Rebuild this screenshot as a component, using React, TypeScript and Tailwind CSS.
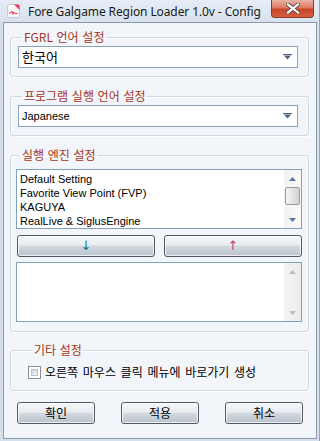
const kr = "font-['Noto_Sans_CJK_KR',sans-serif]";
const btn =
  "h-[22px] rounded-[3px] border border-[#4f5863] bg-[linear-gradient(to_bottom,#f5f7f9_0%,#e8ecef_46%,#d3dae0_50%,#b9c3cc_100%)] shadow-[inset_0_0_0_1px_rgba(255,255,255,0.75)] flex items-center justify-center";
const group =
  "ml-[6px] w-[299px] rounded-[3px] border border-[#d0d9e3] shadow-[1px_1px_0_#ffffff,inset_1px_1px_0_#ffffff]";

function Legend({ children }: { children: React.ReactNode }) {
  return (
    <legend className={`ml-[4px] px-[2px] text-[12px] leading-[14px] text-[#a2341a] [word-spacing:1px] ${kr}`}>
      {children}
    </legend>
  );
}

function ComboArrow() {
  return (
    <svg width="9" height="6" viewBox="0 0 9 6" className="mr-[5px]">
      <path d="M0 0H9V1H0Z M1 1.5H8L4.5 5.5Z" fill="#4b6183" />
    </svg>
  );
}

function Combo({ children }: { children: React.ReactNode }) {
  return (
    <div className="w-[280px] h-[22px] border border-[#8aa1b9] bg-white flex items-center justify-between pl-[3px]">
      {children}
      <ComboArrow />
    </div>
  );
}

function Tri({ up, color }: { up?: boolean; color: string }) {
  return (
    <svg width="7" height="4" viewBox="0 0 7 4">
      <path d={up ? "M0 4L3.5 0L7 4Z" : "M0 0L7 0L3.5 4Z"} fill={color} />
    </svg>
  );
}

function ScrollBar({ disabled }: { disabled?: boolean }) {
  const c = disabled ? "#bcbcbc" : "#5577a0";
  return (
    <div
      className={`w-[17px] h-full flex flex-col ${
        disabled
          ? "bg-[linear-gradient(to_right,#f4f4f4,#ececec)]"
          : "bg-[linear-gradient(to_right,#f2f2f2,#fafafa)]"
      }`}
    >
      <div className="h-[17px] flex items-center justify-center">
        <Tri up color={c} />
      </div>
      {disabled ? (
        <div className="flex-1" />
      ) : (
        <>
          <div className="h-[18px] mx-[1px] rounded-[2px] border border-[#9c9c9c] bg-[linear-gradient(to_right,#f3f3f3,#e2e2e2_60%,#cfcfcf)]" />
          <div className="flex-1" />
        </>
      )}
      <div className="h-[17px] flex items-center justify-center">
        <Tri color={c} />
      </div>
    </div>
  );
}

function ListBox({ items, disabled }: { items: string[]; disabled?: boolean }) {
  return (
    <div className="w-[286px] h-[60px] border border-[#829fbc] bg-white flex">
      <div className="flex-1 pl-[3px] pt-[2px] font-['Liberation_Sans',Arial,sans-serif] text-[11px] leading-[14px] text-black overflow-hidden">
        {items.map((it) => (
          <div key={it}>{it}</div>
        ))}
      </div>
      <ScrollBar disabled={disabled} />
    </div>
  );
}

export default function App() {
  return (
    <div className="w-[320px] h-[441px] bg-[#d6e0ec] border-r border-[#98a6b6] overflow-hidden flex flex-col">
      {/* title bar */}
      <div className="h-[22px] flex items-start bg-[linear-gradient(to_bottom,#e6edf6,#d7e1ed)]">
        <svg width="13" height="14" viewBox="0 0 13 14" className="ml-[7px] mt-[4px]">
          <rect x="0.5" y="0.5" width="12" height="13" rx="2" fill="#fbfbfb" stroke="#c9c9c9" />
          <path d="M7 0.5H11Q12.5 0.5 12.5 2V6L7 0.5Z" fill="#ee3b6a" />
          <path d="M2 9H4L5 7L6 10.5L7 8L8 9.5H11" fill="none" stroke="#e0334f" strokeWidth="0.9" />
        </svg>
        <span className="ml-[8px] mt-[4px] text-[12px] leading-[16px] text-[#1a1a1a] font-['Noto_Sans',sans-serif] tracking-[-0.1px]">
          Fore Galgame Region Loader 1.0v - Config
        </span>
        <div className="ml-auto mr-[5px] w-[43px] h-[18px] rounded-b-[4px] border border-t-0 border-[#8a3a2a] bg-[linear-gradient(to_bottom,#eab3a5_0%,#dc7a62_45%,#c8452a_55%,#d85f3e_100%)] flex items-center justify-center">
          <svg width="14" height="11" viewBox="0 0 14 11">
            <path d="M2 1.5L12 9.5M12 1.5L2 9.5" stroke="#5a4a48" strokeWidth="4" strokeLinecap="square" />
            <path d="M2 1.5L12 9.5M12 1.5L2 9.5" stroke="#ffffff" strokeWidth="2.2" strokeLinecap="square" />
          </svg>
        </div>
      </div>

      {/* client area */}
      <div className="ml-[3px] w-[314px] h-[417px] border border-[#8b99aa] bg-[#f2f5fa] flex flex-col">
        <fieldset className={`${group} mt-[7px] pl-[7px] pt-[2px] pb-[8px]`}>
          <Legend>FGRL 언어 설정</Legend>
          <Combo>
            <span className={`text-[13px] leading-[16px] text-black ${kr}`}>한국어</span>
          </Combo>
        </fieldset>

        <fieldset className={`${group} mt-[12px] pl-[7px] pt-[2px] pb-[8px]`}>
          <Legend>프로그램 실행 언어 설정</Legend>
          <Combo>
            <span className="font-['Liberation_Sans',Arial,sans-serif] text-[11px] leading-[14px] text-black">Japanese</span>
          </Combo>
        </fieldset>

        <fieldset className={`${group} mt-[12px] pl-[5px] pt-[7px] pb-[9px]`}>
          <Legend>실행 엔진 설정</Legend>
          <ListBox items={["Default Setting", "Favorite View Point (FVP)", "KAGUYA", "RealLive & SiglusEngine"]} />
          <div className="mt-[6px] flex gap-[9px] pl-[1px]">
            <div className={`${btn} w-[138px]`}>
              <span className="text-[13px] leading-[14px] text-[#1f6f8c] font-['DejaVu_Sans',sans-serif]">↓</span>
            </div>
            <div className={`${btn} w-[138px]`}>
              <span className="text-[13px] leading-[14px] text-[#c2407c] font-['DejaVu_Sans',sans-serif]">↑</span>
            </div>
          </div>
          <div className="mt-[5px]">
            <ListBox items={[]} disabled />
          </div>
        </fieldset>

        <fieldset className={`${group} mt-[11px] pl-[17px] pt-[8px] pb-[11px]`}>
          <Legend>기타 설정</Legend>
          <div className="flex items-center h-[14px]">
            <div className="w-[13px] h-[13px] border border-[#8e8f8f] bg-white p-[2px]">
              <div className="w-full h-full border border-[#b8c4d1] bg-[linear-gradient(135deg,#cbd3dd,#f4f6f8)]" />
            </div>
            <span className={`ml-[4px] text-[12px] leading-[14px] text-black [word-spacing:2px] ${kr}`}>
              오른쪽 마우스 클릭 메뉴에 바로가기 생성
            </span>
          </div>
        </fieldset>

        <div className="mt-[11px] px-[13px] flex justify-between">
          <div className={`${btn} w-[78px]`}>
            <span className={`text-[12px] leading-[14px] text-black ${kr}`}>확인</span>
          </div>
          <div className={`${btn} w-[78px]`}>
            <span className={`text-[12px] leading-[14px] text-black ${kr}`}>적용</span>
          </div>
          <div className={`${btn} w-[78px]`}>
            <span className={`text-[12px] leading-[14px] text-black ${kr}`}>취소</span>
          </div>
        </div>
      </div>
    </div>
  );
}
